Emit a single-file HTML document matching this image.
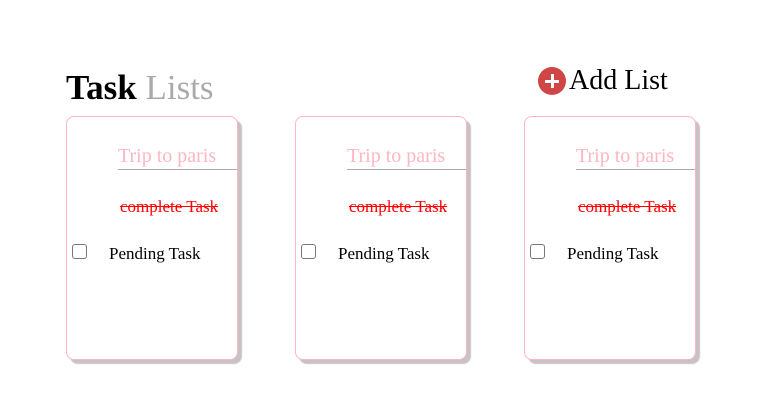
<!DOCTYPE html>
<html><head><style>
*{font-family:"Liberation Serif","Noto Serif CJK SC","DejaVu Serif",serif}
body{margin:0;width:767px;height:409px;background:#fff;position:relative;overflow:hidden}
.t{position:absolute;left:66px;top:66px;font-size:35px;line-height:44px;white-space:nowrap}
.t b{color:#000}.t span{color:#aaa}
.add{position:absolute;left:538px;top:66px;height:30px;display:flex;align-items:center;font-size:28px;white-space:nowrap}
.c{width:28px;height:28px;border-radius:50%;background:#d04545;position:relative;margin-right:3px;flex:none}
.c:before{content:"";position:absolute;left:7px;top:12.5px;width:14px;height:3px;background:#fff}
.c:after{content:"";position:absolute;left:12.5px;top:7px;width:3px;height:14px;background:#fff}
.card{position:absolute;top:116px;width:170px;height:242px;border:1px solid #ffb6c1;border-radius:8px;box-shadow:4px 4px 1px #c9c2c4;background:#fff}
.in{position:absolute;left:51px;top:28px;width:119px;height:24px;border-bottom:1px solid #aaa;color:#ffb6c1;font-size:20px;line-height:22px;white-space:nowrap;overflow:hidden}
.done{position:absolute;left:53px;top:80px;color:red;font-size:17px;text-decoration:line-through;white-space:nowrap}
.cb{position:absolute;left:5px;top:127px;width:13px;height:13px;border:1px solid #777;border-radius:3px}
.p{position:absolute;left:42px;top:127px;font-size:17px;white-space:nowrap}
</style></head><body>
<div class="t"><b>Task</b> <span>Lists</span></div>
<div class="add"><div class="c"></div>Add List</div>
<div class="card" style="left:66px"><div class="in">Trip to paris</div><div class="done">complete Task</div><div class="cb"></div><div class="p">Pending Task</div></div>
<div class="card" style="left:295px"><div class="in">Trip to paris</div><div class="done">complete Task</div><div class="cb"></div><div class="p">Pending Task</div></div>
<div class="card" style="left:524px"><div class="in">Trip to paris</div><div class="done">complete Task</div><div class="cb"></div><div class="p">Pending Task</div></div>
</body></html>
